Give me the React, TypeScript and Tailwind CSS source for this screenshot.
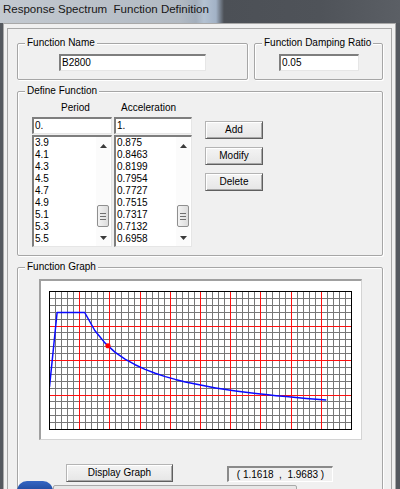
import React from 'react';

const PERIODS = ['3.9', '4.1', '4.3', '4.5', '4.7', '4.9', '5.1', '5.3', '5.5'];
const ACCELS = ['0.875', '0.8463', '0.8199', '0.7954', '0.7727', '0.7515', '0.7317', '0.7132', '0.6958'];

// Iranian code 2800, soil type III: T0 = 0.15, Ts = 0.7, S = 1.75
function spectrum(t: number) {
  if (t <= 0.15) return 1 + 1.75 * (t / 0.15);
  if (t <= 0.7) return 2.75;
  return 2.75 * Math.pow(0.7 / t, 2 / 3);
}

const GRID_W = 302;
const GRID_H = 138;
const X_SCALE = GRID_W / 6;
const Y_SCALE = 117 / 2.75;

const periodsForCurve = [0, 0.15, 0.7];
for (let t = 0.9; t <= 5.51; t += 0.2) periodsForCurve.push(Math.round(t * 10) / 10);

const curve = periodsForCurve
  .map((t) => `${(0.5 + t * X_SCALE).toFixed(1)},${(0.5 + GRID_H - spectrum(t) * Y_SCALE).toFixed(1)}`)
  .join(' ');

const sunken =
  'border-t-2 border-l-2 border-r border-b border-t-[#7e7e7e] border-l-[#7e7e7e] border-r-[#e6e6e6] border-b-[#e6e6e6]';

function GroupBox({ label, className, children }: { label: string; className?: string; children?: React.ReactNode }) {
  return (
    <div
      className={`relative border border-[#a6a6a6] rounded-[2px] shadow-[inset_1px_1px_0_#ffffff,1px_1px_0_#ffffff] ${className ?? ''}`}
    >
      <span className="absolute -top-[7px] left-[7px] bg-[#f0f0f0] px-[2px] text-[10px] leading-[12px] text-black">
        {label}
      </span>
      {children}
    </div>
  );
}

function Button({ label, className }: { label: string; className?: string }) {
  return (
    <div
      className={`flex items-center justify-center border border-[#b4b4b4] border-r-[#5f5f5f] border-b-[#5f5f5f] bg-[linear-gradient(#f4f4f4,#e6e6e6)] shadow-[inset_1px_1px_0_#ffffff,inset_-1px_-1px_0_#a8a8a8] text-[10px] leading-[12px] text-black ${className ?? ''}`}
    >
      {label}
    </div>
  );
}

function Field({ value, className }: { value: string; className?: string }) {
  return (
    <div className={`${sunken} bg-white h-[17px] pl-[1px] flex items-center text-[10px] leading-[12px] text-black ${className ?? ''}`}>
      {value}
    </div>
  );
}

function Arrow({ up }: { up?: boolean }) {
  return (
    <svg width="7" height="4" viewBox="0 0 7 4">
      <polygon points={up ? '0,4 7,4 3.5,0' : '0,0 7,0 3.5,4'} fill="#3a3a3a" />
    </svg>
  );
}

function ListBox({ items, pad }: { items: string[]; pad: string }) {
  return (
    <div className={`${sunken} bg-white h-[112px] mt-[1px] flex`}>
      <div className={`flex-1 ${pad} text-[10px] leading-[12px] text-black`}>
        {items.map((it) => (
          <div key={it} className="h-[12px]">
            {it}
          </div>
        ))}
      </div>
      <div className="w-[14px] mr-[1px] flex flex-col bg-[#fbfbfb]">
        <div className="h-[17px] flex items-center justify-center">
          <Arrow up />
        </div>
        <div className="flex-1 flex flex-col">
          <div className="h-[51px]" />
          <div className="h-[22px] mx-[1px] rounded-[2px] border border-[#8f8f8f] bg-[linear-gradient(to_right,#f3f3f3,#dcdcdc)] flex flex-col items-center justify-center gap-[2px]">
            <div className="w-[6px] h-px bg-[#6f6f6f]" />
            <div className="w-[6px] h-px bg-[#6f6f6f]" />
            <div className="w-[6px] h-px bg-[#6f6f6f]" />
          </div>
        </div>
        <div className="h-[16px] flex items-center justify-center">
          <Arrow />
        </div>
      </div>
    </div>
  );
}

function Graph() {
  const minorX: number[] = [];
  const majorX: number[] = [];
  for (let i = 1; i < 50; i++) {
    const x = Math.round((i * GRID_W) / 50) + 0.5;
    (i % 5 === 0 ? majorX : minorX).push(x);
  }
  const minorY: number[] = [];
  const majorY: number[] = [];
  for (let j = 1; j < 20; j++) {
    const y = Math.round((j * GRID_H) / 20) + 0.5;
    (j % 5 === 0 ? majorY : minorY).push(y);
  }
  const dotX = 0.5 + 1.1618 * X_SCALE;
  const dotY = 0.5 + GRID_H - 1.9683 * Y_SCALE;
  return (
    <svg width={GRID_W + 1} height={GRID_H + 1} viewBox={`0 0 ${GRID_W + 1} ${GRID_H + 1}`}>
      <rect x="0" y="0" width={GRID_W + 1} height={GRID_H + 1} fill="#ffffff" />
      {minorX.map((x) => (
        <line key={`mx${x}`} x1={x} y1={0} x2={x} y2={GRID_H} stroke="#777777" strokeWidth="1" />
      ))}
      {minorY.map((y) => (
        <line key={`my${y}`} x1={0} y1={y} x2={GRID_W} y2={y} stroke="#777777" strokeWidth="1" />
      ))}
      {majorX.map((x) => (
        <line key={`Mx${x}`} x1={x} y1={0} x2={x} y2={GRID_H} stroke="#ff1010" strokeWidth="1" />
      ))}
      {majorY.map((y) => (
        <line key={`My${y}`} x1={0} y1={y} x2={GRID_W} y2={y} stroke="#ff1010" strokeWidth="1" />
      ))}
      <polyline points={curve} fill="none" stroke="#0a0aff" strokeWidth="1.5" strokeLinejoin="round" />
      <circle cx={dotX} cy={dotY} r="2.6" fill="#ff0000" />
      <rect x="0.5" y="0.5" width={GRID_W} height={GRID_H} fill="none" stroke="#000000" strokeWidth="1" />
    </svg>
  );
}

export default function App() {
  return (
    <div className="relative w-[400px] h-[489px] overflow-hidden bg-[#55595f] [font-family:'Liberation_Sans',Arial,sans-serif]">
      {/* title bar */}
      <div className="h-[23px] bg-[linear-gradient(to_right,#c3c9d0_0%,#b2bac3_45%,#a3aebb_49%,#b4c2d2_51%,#a2b2c6_54%,#4c5056_56%,#4f5359_80%,#5b5f65_100%)] pl-[3px]">
        <div className="text-[11.5px] leading-[18px] text-[#161616] whitespace-pre">Response Spectrum  Function Definition</div>
      </div>

      {/* window frame */}
      <div className="h-[466px] ml-[3px] mr-[4px] bg-[#f0f0f0] border-t border-l border-r border-[#a8a8a8] pt-[4px] pl-[3px] pr-[3px]">
        <div className="h-full border-t border-l border-r border-[#a8a8a8] pl-[9px] pr-[8px] text-black">
          {/* name + damping */}
          <div className="mt-[14px] flex gap-[6px]">
            <GroupBox label="Function Name" className="w-[231px] h-[37px]">
              <Field value="B2800" className="ml-[41px] mt-[10px] w-[147px]" />
            </GroupBox>
            <GroupBox label="Function Damping Ratio" className="flex-1 h-[37px]">
              <Field value="0.05" className="ml-[24px] mt-[10px] w-[80px]" />
            </GroupBox>
          </div>

          {/* define function */}
          <GroupBox label="Define Function" className="mt-[11px] h-[165px]">
            <div className="flex ml-[14px]">
              <div className="w-[80px]">
                <div className="mt-[10px] ml-[29px] text-[10px] leading-[12px]">Period</div>
                <Field value="0." className="mt-[3px]" />
                <ListBox items={PERIODS} pad="pl-[1px]" />
              </div>
              <div className="w-[78px] ml-[2px]">
                <div className="mt-[10px] ml-[7px] text-[10px] leading-[12px]">Acceleration</div>
                <Field value="1." className="mt-[3px]" />
                <ListBox items={ACCELS} pad="pl-[1px]" />
              </div>
              <div className="ml-[13px] mt-[29px] flex flex-col gap-[8px]">
                <Button label="Add" className="w-[58px] h-[18px]" />
                <Button label="Modify" className="w-[58px] h-[18px]" />
                <Button label="Delete" className="w-[58px] h-[18px]" />
              </div>
            </div>
          </GroupBox>

          {/* function graph */}
          <GroupBox label="Function Graph" className="mt-[11px] h-[240px]">
            <div className="ml-[21px] mt-[11px] w-[323px] h-[161px] bg-white border-t-2 border-l-2 border-r border-b border-t-[#a0a0a0] border-l-[#a0a0a0] border-r-[#d4d4d4] border-b-[#d4d4d4] pl-[8px] pt-[10px]">
              <Graph />
            </div>
            <div className="flex items-start ml-[48px] mt-[24px]">
              <Button label="Display Graph" className="w-[107px] h-[18px]" />
              <div className="ml-[54px] mt-[2px] w-[106px] h-[16px] border-t-2 border-l-2 border-r border-b border-t-[#8a8a8a] border-l-[#8a8a8a] border-r-[#ffffff] border-b-[#ffffff] bg-[#f0f0f0] flex items-center justify-center text-[10px] leading-[12px] whitespace-pre">
                ( 1.1618  ,  1.9683 )
              </div>
            </div>
          </GroupBox>
        </div>
      </div>

      {/* taskbar peeking in at the bottom */}
      <div className="absolute left-[17px] top-[481px] w-[36px] h-[14px] rounded-t-[10px] bg-[linear-gradient(#3566c4,#163e8e)]" />
      <div className="absolute left-[53px] top-[485px] w-[244px] h-[8px] rounded-t-[2px] border border-[#a9a9a9] bg-[#e7e7e7]" />
    </div>
  );
}
